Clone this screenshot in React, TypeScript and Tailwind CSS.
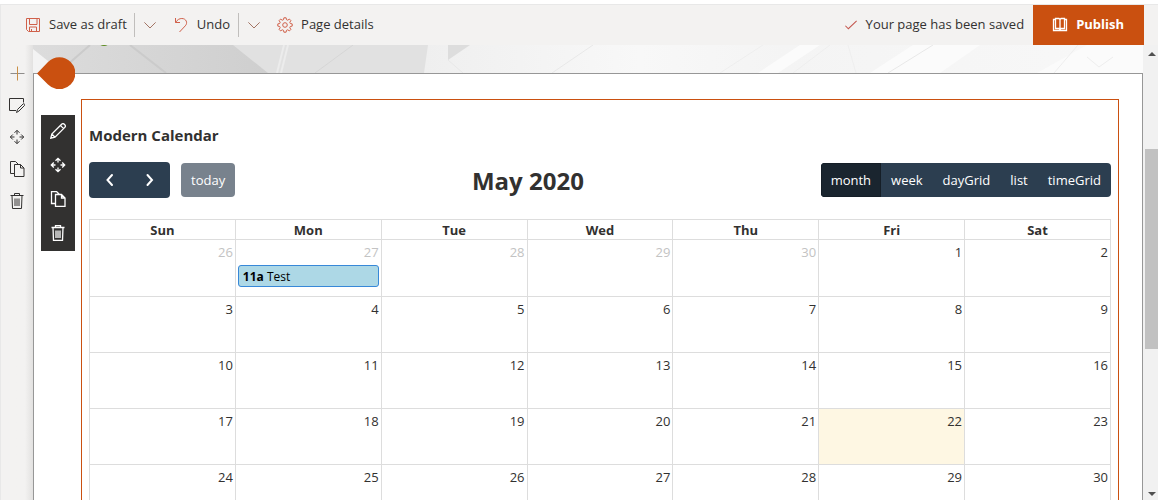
import { useState } from "react";
import type { ReactNode } from "react";

const weekdays = ["Sun", "Mon", "Tue", "Wed", "Thu", "Fri", "Sat"];

type Day = { day: number; muted?: boolean; today?: boolean; event?: { time: string; title: string } };

const weeks: Day[][] = [
  [
    { day: 26, muted: true },
    { day: 27, muted: true, event: { time: "11a", title: "Test" } },
    { day: 28, muted: true },
    { day: 29, muted: true },
    { day: 30, muted: true },
    { day: 1 },
    { day: 2 },
  ],
  ...[3, 10, 17, 24].map((start) =>
    Array.from({ length: 7 }, (_, i) => ({ day: start + i, today: start + i === 22 })),
  ),
];

function Icon({ children, className = "size-4" }: { children: ReactNode; className?: string }) {
  return (
    <svg viewBox="0 0 16 16" fill="none" stroke="currentColor" className={className} aria-hidden="true">
      {children}
    </svg>
  );
}

const SaveIcon = () => (
  <Icon>
    <path d="M1.5 1.5h13v13h-11l-2-2zM4.5 1.5v6h7.500v-6M4.500 14.500v-4.500h7v4.500M6.500 12v2.500" />
  </Icon>
);
const UndoIcon = () => (
  <Icon>
    <path d="M2.500 1v4.500H7M2.500 5.500C4.500 2.500 6.500 1.500 8.800 1.500c4.500 0 6.200 4.500 3.500 7.300L6.500 15" />
  </Icon>
);
const ChevronDown = () => (
  <Icon className="size-3">
    <path d="M.5 4.500 8 12l7.500-7.500" strokeWidth="1.300" />
  </Icon>
);
const GearIcon = () => (
  <Icon>
    <circle cx="8" cy="8" r="2.300" />
    <path d="M6.900.8h2.200l.4 1.900 1.200.5 1.700-1.100 1.500 1.500-1.100 1.700.5 1.200 1.900.4v2.200l-1.900.4-.5 1.200 1.100 1.700-1.500 1.500-1.700-1.100-1.200.5-.4 1.900H6.900l-.4-1.900-1.200-.5-1.700 1.100-1.500-1.500 1.100-1.700-.5-1.200-1.900-.4V6.900l1.900-.4.5-1.200-1.100-1.700 1.500-1.500 1.700 1.100 1.200-.5z" />
  </Icon>
);
const CheckIcon = () => (
  <Icon className="size-3">
    <path d="m.5 9 4 4L15.500 2.500" strokeWidth="1.400" />
  </Icon>
);
const BookIcon = () => (
  <Icon>
    <path d="M3.500 1.500H7l1 1 1-1h3.500v10H9l-1 1-1-1H3.500zM8 2.500v11M3.500 2.500h-2v11h13v-11h-2" strokeWidth="1.300" />
  </Icon>
);
const PlusIcon = () => (
  <Icon>
    <path d="M1.500 8.500h14" stroke="#8f8d8b" />
    <path d="M8.500 1.500v14" stroke="#c98f45" />
  </Icon>
);
const EditSectionIcon = () => (
  <Icon>
    <path d="M7 13.500H.5v-12h14v4M7.500 15.500l1-3L14 7c1-1 2.500.5 1.500 1.500L10 14z" />
  </Icon>
);
const MoveIcon = () => (
  <Icon>
    <path d="M8 5.500v-4M5.500 3.800 8 1.300l2.500 2.500M8 10.500v4M5.500 12.200 8 14.700l2.500-2.500M5.500 8h-4M3.800 5.500 1.300 8l2.500 2.500M10.500 8h4M12.200 5.500 14.700 8l-2.500 2.500" />
  </Icon>
);
const CopyIcon = () => (
  <Icon>
    <path d="M5.500 12.500h-4V.5h5l3 3M5.500 3.500h6l3.500 3.500v8.500H5.500zM11.500 3.500v3.500H15" />
  </Icon>
);
const TrashIcon = () => (
  <Icon>
    <path d="M1.500 2.500h13M5.500 2.500v-2h5v2M3 2.500l.5 13h9l.5-13M6 5.500V13M8 5.500V13M10 5.500V13" />
  </Icon>
);
const PencilIcon = () => (
  <Icon>
    <path d="m.8 15.200 1-4.200L11.600 1.200c1.800-1.800 5 1.400 3.200 3.200L5 14.200zM10.400 2.400l3.200 3.200M1.800 11 5 14.200" />
  </Icon>
);

const sectionTools = [
  { label: "Add a new section", icon: <PlusIcon /> },
  { label: "Edit section", icon: <EditSectionIcon /> },
  { label: "Move section", icon: <MoveIcon /> },
  { label: "Duplicate section", icon: <CopyIcon /> },
  { label: "Delete section", icon: <TrashIcon /> },
];

const webPartTools = [
  { label: "Edit web part", icon: <PencilIcon /> },
  { label: "Move web part", icon: <MoveIcon /> },
  { label: "Duplicate web part", icon: <CopyIcon /> },
  { label: "Delete web part", icon: <TrashIcon /> },
];

function CommandBar() {
  return (
    <header className="flex h-10 shrink-0 items-center bg-[#f3f2f1] pr-[14px] pl-6 whitespace-nowrap text-[#323130]">
      <button className="flex items-center gap-2">
        <span className="text-[#d0604a]"><SaveIcon /></span>
        Save as draft
      </button>
      <span className="ml-[7px] h-6 w-px bg-[#c0bebc]" />
      <button aria-label="More save options" className="ml-[9px] text-[#a07060]"><ChevronDown /></button>
      <button className="ml-[17px] flex items-center gap-2">
        <span className="text-[#d0604a]"><UndoIcon /></span>
        Undo
      </button>
      <span className="ml-2 h-6 w-px bg-[#c0bebc]" />
      <button aria-label="More undo options" className="ml-[9px] text-[#a07060]"><ChevronDown /></button>
      <button className="ml-[17px] flex items-center gap-2">
        <span className="text-[#d0604a]"><GearIcon /></span>
        Page details
      </button>
      <p className="ml-auto flex items-center gap-[9px]">
        <span className="text-[#c4574f]"><CheckIcon /></span>
        Your page has been saved
      </p>
      <button className="ml-[9px] flex h-full items-center gap-2 bg-[#ca5010] pr-5 pl-[19px] font-bold text-white">
        <BookIcon />
        Publish
      </button>
    </header>
  );
}

function Banner() {
  return (
    <svg viewBox="0 0 1110 28" preserveAspectRatio="none" className="h-7 w-full shrink-0" aria-hidden="true">
      <defs>
        <linearGradient id="roof" gradientUnits="userSpaceOnUse" x1="0" x2="235" y1="0" y2="0">
          <stop offset="0" stopColor="#dcdcdc" />
          <stop offset="1" stopColor="#cfcfcf" />
        </linearGradient>
        <linearGradient id="wall" gradientUnits="userSpaceOnUse" x1="391" x2="1110" y1="0" y2="0">
          <stop offset="0" stopColor="#efefef" />
          <stop offset=".3" stopColor="#f8f8f8" />
          <stop offset=".5" stopColor="#f4f4f4" />
          <stop offset="1" stopColor="#f8f8f8" />
        </linearGradient>
      </defs>
      <path fill="url(#roof)" d="M0 0h240v28H0z" />
      <path fill="#f3f3f3" d="M0 4 30 28H0z" />
      <path fill="#e1e1e1" d="M200 0h195v28H235z" />
      <path fill="url(#wall)" d="M395 0h715v28H391z" />
      <path fill="#dddddd" d="M415 0h22l-22 15z" />
      <path fill="#fbfbfb" d="m725 28 42-28h20l-42 28zM837 28l43-28h67l-40 28zM1004 28l50-28h56v28z" />
      <path fill="none" stroke="#cbcbcb" strokeWidth="2" d="m25 28 32-28M97 0l36 28" />
      <path fill="none" stroke="#ececec" strokeWidth="2" d="m244 28 7-28M248 28l7-28" />
      <path fill="none" stroke="#d6d6d6" d="m282 28 38-28" />
      <path fill="none" stroke="#e8e8e8" d="m415 15 15 13M519 28l41-28M855 28l45-28" />
      <path fill="none" stroke="#eeeeee" d="m687 28 43-28M760 28l37-28M823 28l-8-28M1021 28l24-28M1054 12l12 10 14-10" />
      <ellipse cx="71" cy="-2" rx="5" ry="3" fill="#5b8a1e" />
    </svg>
  );
}

function Calendar() {
  const [view, setView] = useState("month");
  return (
    <section className="min-w-0 flex-1 border border-[#ca5010] px-[7px] pt-6">
      <h2 className="text-[15px] leading-[22px] font-bold text-[#323130]">Modern Calendar</h2>
      <div className="mt-4 flex items-center justify-between">
        <div className="flex items-center gap-[11px] text-white">
          <div className="flex h-9 overflow-hidden rounded bg-[#2c3e50]">
            <button aria-label="Previous month" className="flex w-[41px] items-center justify-center">
              <Icon><path d="M10 3 5.500 8l4.500 5" strokeWidth="2" strokeLinecap="round" /></Icon>
            </button>
            <button aria-label="Next month" className="flex w-10 items-center justify-center">
              <Icon><path d="M5.500 3 10 8l-4.500 5" strokeWidth="2" strokeLinecap="round" /></Icon>
            </button>
          </div>
          <button className="h-[34px] rounded bg-[#78828d] px-[10px] pt-[2px]">today</button>
        </div>
        <h1 className="pt-[2px] text-2xl font-bold text-[#323130]">May 2020</h1>
        <div className="flex h-[34px] overflow-hidden rounded bg-[#2c3e50] text-white">
          {["month", "week", "dayGrid", "list", "timeGrid"].map((name) => (
            <button
              key={name}
              aria-pressed={view === name}
              onClick={() => setView(name)}
              className={`pt-[2px] ${view === name ? "border border-[#151e27] bg-[#1a252f] px-[9px]" : "px-[10px]"}`}
            >
              {name}
            </button>
          ))}
        </div>
      </div>
      <table className="mt-[21px] w-full table-fixed border-collapse text-[#323130]">
        <thead>
          <tr className="h-5">
            {weekdays.map((name) => (
              <th key={name} className="border border-[#dddddd] p-0 pt-[2px] leading-[17px] font-bold">{name}</th>
            ))}
          </tr>
        </thead>
        <tbody>
          {weeks.map((week, index) => (
            <tr key={week[0].day} className={index === 0 ? "h-[57px]" : "h-14"}>
              {week.map(({ day, muted, today, event }) => (
                <td
                  key={day}
                  className={`border border-[#dddddd] p-0 align-top ${today ? "bg-[#fef7e3]" : ""}`}
                >
                  <div className={`px-[2px] pt-[2px] text-right leading-5 ${muted ? "text-[#c3c3c3]" : ""}`}>{day}</div>
                  {event && (
                    <a href="#event" className="mx-[2px] mt-[3px] block h-[22px] rounded-[3px] border border-[#3788d8] bg-[#add8e6] px-1 pt-px text-xs leading-5 text-black">
                      <b>{event.time}</b> {event.title}
                    </a>
                  )}
                </td>
              ))}
            </tr>
          ))}
        </tbody>
      </table>
    </section>
  );
}

export default function App() {
  return (
    <div className="flex h-screen flex-col overflow-hidden bg-white pt-1 font-['Open_Sans','Noto_Sans',sans-serif] text-[13px]">
      <div className="flex min-h-0 flex-1 flex-col border-t border-l border-[#e8e8e8]">
        <CommandBar />
        <div className="flex min-h-0 flex-1">
          <nav aria-label="Section tools" className="flex w-8 shrink-0 flex-col bg-linear-to-r from-[#f3f2f1] from-75% to-[#e2e1e0] pt-3 text-[#323130]">
            {sectionTools.map((tool) => (
              <button key={tool.label} aria-label={tool.label} className="flex h-8 w-full items-center justify-center">
                {tool.icon}
              </button>
            ))}
          </nav>
          <main className="flex min-w-0 flex-1 flex-col overflow-hidden">
            <Banner />
            <div className="relative flex flex-1 items-start gap-[6px] border-x border-t border-[#979797] pt-[25px] pr-[23px] pl-[7px]">
              <svg viewBox="0 0 38 32" className="absolute -top-[17px] left-[3px] h-8 w-[38px]" aria-hidden="true">
                <path fill="#ca5010" d="M0 16.500 11 5a16 16 0 1 1 0 22.500z" />
              </svg>
              <div role="toolbar" aria-label="Web part tools" className="mt-4 flex w-[34px] shrink-0 flex-col bg-[#323130] stroke-[1.3] text-white">
                {webPartTools.map((tool) => (
                  <button key={tool.label} aria-label={tool.label} className="flex h-[34px] items-center justify-center pr-px pb-[2px]">
                    {tool.icon}
                  </button>
                ))}
              </div>
              <Calendar />
            </div>
          </main>
          <div aria-hidden="true" className="flex w-[15px] shrink-0 flex-col items-center bg-[#f1f1f1] pl-[2px]">
            <svg viewBox="0 0 8 4" className="mt-[7px] h-1 w-2"><path d="M0 4 4 0l4 4z" fill="#505050" /></svg>
            <div className="grow-[93]" />
            <div className="w-full grow-[200] bg-[#c1c1c1]" />
            <div className="grow-[143]" />
            <svg viewBox="0 0 8 4" className="mb-1 h-1 w-2"><path d="M0 0h8L4 4z" fill="#505050" /></svg>
          </div>
        </div>
      </div>
    </div>
  );
}
